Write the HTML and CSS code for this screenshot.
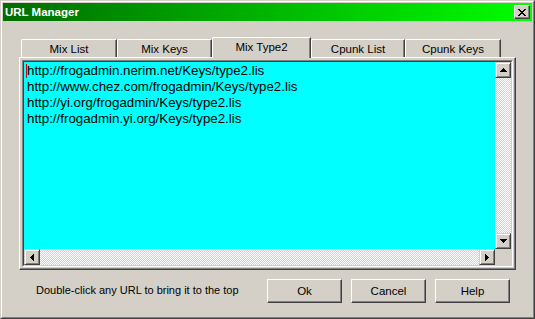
FILE: index.html
```html
<!DOCTYPE html>
<html>
<head>
<meta charset="utf-8">
<link rel="stylesheet" href="styles.css">
</head>
<body>
<div class="window">
  <div class="frame">
    <div class="titlebar">
      <span class="title">URL Manager</span>
      <div class="close">
        <svg width="8" height="7" viewBox="0 0 8 7" shape-rendering="crispEdges"><path fill="#000" d="M0 0h2v1H0zM6 0h2v1H6zM1 1h2v1H1zM5 1h2v1H5zM2 2h4v1H2zM3 3h2v1H3zM2 4h4v1H2zM1 5h2v1H1zM5 5h2v1H5zM0 6h2v1H0zM6 6h2v1H6z"/></svg>
      </div>
    </div>
    <div class="content">
      <div class="tabrow">
        <div class="tab t1">Mix List</div>
        <div class="tab t2">Mix Keys</div>
        <div class="tab t3 active">Mix Type2</div>
        <div class="tab t4">Cpunk List</div>
        <div class="tab t5">Cpunk Keys</div>
      </div>
      <div class="panel">
        <div class="listbox">
          <div class="lb-inner">
            <div class="items">
              <div class="item"><span class="caret"></span>http://frogadmin.nerim.net/Keys/type2.lis</div>
              <div class="item">http://www.chez.com/frogadmin/Keys/type2.lis</div>
              <div class="item">http://yi.org/frogadmin/Keys/type2.lis</div>
              <div class="item">http://frogadmin.yi.org/Keys/type2.lis</div>
            </div>
            <div class="vscroll">
              <div class="sbtn"><svg width="7" height="4" viewBox="0 0 7 4" shape-rendering="crispEdges"><path fill="#000" d="M3 0h1v1h1v1h1v1h1v1H0V3h1V2h1V1h1z"/></svg></div>
              <div class="track"></div>
              <div class="sbtn"><svg width="7" height="4" viewBox="0 0 7 4" shape-rendering="crispEdges"><path fill="#000" d="M0 0h7v1H6v1H5v1H4v1H3V3H2V2H1V1H0z"/></svg></div>
            </div>
            <div class="hscroll">
              <div class="sbtn"><svg width="4" height="7" viewBox="0 0 4 7" shape-rendering="crispEdges"><path fill="#000" d="M0 3h1V2h1V1h1V0h1v7H3V6H2V5H1V4H0z"/></svg></div>
              <div class="track"></div>
              <div class="sbtn"><svg width="4" height="7" viewBox="0 0 4 7" shape-rendering="crispEdges"><path fill="#000" d="M0 0h1v1h1v1h1v1h1v1H3v1H2v1H1v1H0z"/></svg></div>
            </div>
            <div class="corner"></div>
          </div>
        </div>
      </div>
      <div class="bottom">
        <div class="hint">Double-click any URL to bring it to the top</div>
        <div class="buttons">
          <div class="btn">Ok</div>
          <div class="btn">Cancel</div>
          <div class="btn">Help</div>
        </div>
      </div>
    </div>
  </div>
</div>
</body>
</html>
```
FILE: styles.css
```css
* { box-sizing: border-box; }
html, body { margin: 0; padding: 0; }
body {
  width: 535px;
  height: 319px;
  overflow: hidden;
  background: #d4d0c8;
  font-family: "Liberation Sans", Arial, sans-serif;
  color: #000;
}
.window {
  width: 535px;
  height: 319px;
  border: 1px solid;
  border-color: #d4d0c8 #404040 #404040 #d4d0c8;
}
.frame {
  height: 100%;
  border: 1px solid;
  border-color: #fff #808080 #808080 #fff;
  padding: 1px;
  display: flex;
  flex-direction: column;
}
.titlebar {
  height: 18px;
  flex: none;
  background: linear-gradient(to right, #006c00, #00ff00);
  display: flex;
  align-items: flex-start;
  justify-content: space-between;
  padding: 0 2px;
}
.title {
  color: #fff;
  font-weight: bold;
  font-size: 11.5px;
  line-height: 18px;
}
.close {
  margin-top: 2px;
  width: 16px;
  height: 14px;
  background: #d4d0c8;
  border: 1px solid;
  border-color: #fff #404040 #404040 #fff;
  box-shadow: inset -1px -1px #808080;
  display: flex;
  align-items: center;
  justify-content: center;
}
.close svg { display: block; }
.content {
  flex: 1;
  padding: 16px 16px 0 16px;
}
.tabrow {
  display: flex;
  align-items: flex-end;
  height: 20px;
  padding-left: 2px;
  position: relative;
  z-index: 1;
}
.tab {
  height: 18px;
  border-top: 1px solid #fff;
  border-left: 1px solid #fff;
  border-right: 1px solid #404040;
  box-shadow: inset -1px 0 #808080;
  border-top-left-radius: 2px;
  background: #d4d0c8;
  font-size: 11.5px;
  text-align: center;
  line-height: 18px;
}
.tab.active {
  height: 21px;
  margin-bottom: -1px;
  line-height: 18px;
}
.t1 { width: 96px; }
.t2 { width: 95px; }
.t3 { width: 99px; }
.t4 { width: 94px; }
.t5 { width: 96px; }
.panel {
  width: 497px;
  height: 213px;
  border: 1px solid;
  border-color: #fff #404040 #404040 #fff;
  box-shadow: inset -1px -1px #808080;
  padding: 2px;
}
.listbox {
  height: 100%;
  border: 1px solid;
  border-color: #808080 #fff #fff #808080;
}
.lb-inner {
  height: 100%;
  border: 1px solid;
  border-color: #404040 #d4d0c8 #d4d0c8 #404040;
  display: grid;
  grid-template-columns: 1fr 16px;
  grid-template-rows: 1fr 16px;
}
.items {
  background: #00ffff;
  font-size: 13.3px;
  line-height: 16px;
  padding: 1px 0 0 3px;
  overflow: hidden;
  white-space: nowrap;
}
.caret {
  display: inline-block;
  width: 1px;
  height: 14px;
  background: #e00000;
  margin-left: -1px;
  vertical-align: -3px;
}
.vscroll {
  display: flex;
  flex-direction: column;
}
.hscroll {
  display: flex;
}
.track {
  flex: 1;
  background: repeating-conic-gradient(#fff 0 25%, #d4d0c8 0 50%) 0 0 / 2px 2px;
}
.sbtn {
  width: 16px;
  height: 16px;
  flex: none;
  background: #d4d0c8;
  border: 1px solid;
  border-color: #d4d0c8 #404040 #404040 #d4d0c8;
  box-shadow: inset 1px 1px #fff, inset -1px -1px #808080;
  display: flex;
  align-items: center;
  justify-content: center;
}
.sbtn svg { display: block; }
.corner { background: #d4d0c8; }
.bottom {
  display: flex;
  align-items: center;
  margin-top: 9px;
  padding-left: 17px;
  padding-right: 6px;
}
.hint {
  flex: 1;
  font-size: 11px;
  margin-top: -3px;
}
.buttons {
  display: flex;
  gap: 9px;
}
.btn {
  width: 75px;
  height: 24px;
  border: 1px solid;
  border-color: #fff #404040 #404040 #fff;
  box-shadow: inset -1px -1px #808080;
  font-size: 11.5px;
  display: flex;
  align-items: center;
  justify-content: center;
}
```
